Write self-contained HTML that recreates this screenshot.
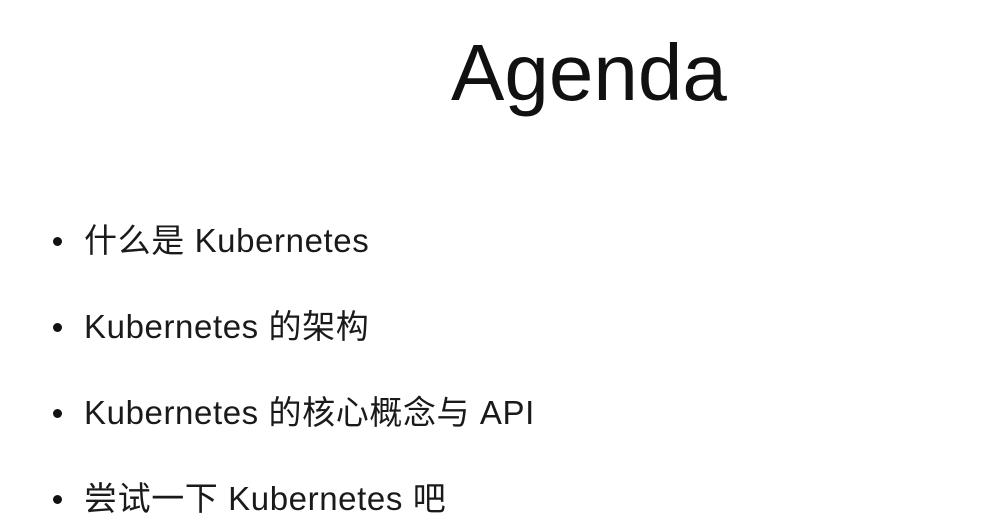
<!DOCTYPE html>
<html><head><meta charset="utf-8"><style>
body{margin:0;width:998px;height:532px;background:#fff;overflow:hidden;font-family:"Liberation Sans","Noto Sans CJK SC",sans-serif;color:#111;position:relative}
.t{position:absolute;left:451px;top:23px;font-size:80px;line-height:100px;white-space:nowrap}
.l{position:absolute;left:84px;font-size:33px;line-height:40px;white-space:nowrap;letter-spacing:0.6px;color:#1a1a1a}
.b{position:absolute;left:53px;width:9px;height:9px;border-radius:50%;background:#111}
</style></head><body>
<div class="t">Agenda</div>
<div class="b" style="top:237px"></div><div class="l" style="top:221px">什么是 Kubernetes</div>
<div class="b" style="top:323px"></div><div class="l" style="top:307px">Kubernetes 的架构</div>
<div class="b" style="top:409px"></div><div class="l" style="top:393px">Kubernetes 的核心概念与 API</div>
<div class="b" style="top:495px"></div><div class="l" style="top:479px">尝试一下 Kubernetes 吧</div>
</body></html>
